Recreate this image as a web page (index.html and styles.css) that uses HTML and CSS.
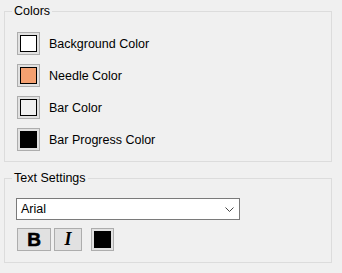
FILE: index.html
```html
<!DOCTYPE html>
<html>
<head>
    <title>Gauge Settings</title>
    <link rel="stylesheet" href="styles.css">
</head>
<body>
    <fieldset class="group colors">
        <legend>Colors</legend>
        <div class="color-row">
            <button class="swatch"><span class="chip chip-white"></span></button>
            <span class="label">Background Color</span>
        </div>
        <div class="color-row">
            <button class="swatch"><span class="chip chip-needle"></span></button>
            <span class="label">Needle Color</span>
        </div>
        <div class="color-row">
            <button class="swatch"><span class="chip chip-bar"></span></button>
            <span class="label">Bar Color</span>
        </div>
        <div class="color-row">
            <button class="swatch"><span class="chip chip-black"></span></button>
            <span class="label">Bar Progress Color</span>
        </div>
    </fieldset>

    <fieldset class="group text-settings">
        <legend>Text Settings</legend>
        <div class="combo">
            <span class="combo-value">Arial</span>
            <svg class="combo-arrow" width="9" height="5" viewBox="0 0 9 5">
                <path d="M0.5 0.5 L4.5 4.5 L8.5 0.5" fill="none" stroke="#444" stroke-width="1"/>
            </svg>
        </div>
        <div class="tools">
            <button class="tool tool-bold">B</button>
            <button class="tool tool-italic">I</button>
            <button class="swatch text-color"><span class="chip chip-black"></span></button>
        </div>
    </fieldset>
</body>
</html>
```

FILE: styles.css
```css
/* dialog look */
body {
    margin: 0;
    padding: 4px 0 0 4px;
    background: #f0f0f0;
    font-family: "Liberation Sans", Arial, sans-serif;
    font-size: 12.5px;
    color: #000;
}

.group {
    box-sizing: border-box;
    width: 328px;
    margin: 0;
    border: 1px solid #dcdcdc;
    padding: 14px 0 10px 12px;
}

.group legend {
    margin-left: -5px;
    padding: 0 2px;
    line-height: 14px;
    font-size: 12.5px;
}

.text-settings {
    margin-top: 9px;
    padding-top: 13px;
    padding-bottom: 11px;
}

.color-row {
    display: flex;
    align-items: center;
    gap: 9px;
    height: 23px;
    margin-bottom: 9px;
}

.color-row:last-child {
    margin-bottom: 0;
}

.swatch {
    box-sizing: border-box;
    width: 23px;
    height: 23px;
    padding: 2px;
    margin: 0;
    border: 1px solid #adadad;
    background: #e1e1e1;
    display: flex;
}

.chip {
    box-sizing: border-box;
    width: 17px;
    height: 17px;
    border: 1px solid #000;
}

.chip-white { background: #fff; }
.chip-needle { background: #f4a070; }
.chip-bar { background: #f0f0f0; }
.chip-black { background: #000; }

.combo {
    box-sizing: border-box;
    width: 224px;
    height: 22px;
    margin-left: -1px;
    border: 1px solid #7a7a7a;
    background: #fff;
    display: flex;
    align-items: center;
    justify-content: space-between;
    padding: 0 5px 0 4px;
}

.tools {
    display: flex;
    margin-top: 8px;
}

.tool {
    box-sizing: border-box;
    height: 23px;
    margin: 0 3px 0 0;
    padding: 0;
    border: 1px solid #adadad;
    background: #e1e1e1;
    color: #000;
    line-height: 21px;
}

.tool-bold {
    width: 34px;
    font-family: "Liberation Sans", Arial, sans-serif;
    font-size: 19px;
    font-weight: 900;
    -webkit-text-stroke: 0.6px #000;
}

.tool-italic {
    width: 28px;
    font-family: "Liberation Serif", "Times New Roman", serif;
    font-size: 18px;
    font-style: italic;
    font-weight: bold;
}

.text-color {
    margin-left: 6px;
}
```
